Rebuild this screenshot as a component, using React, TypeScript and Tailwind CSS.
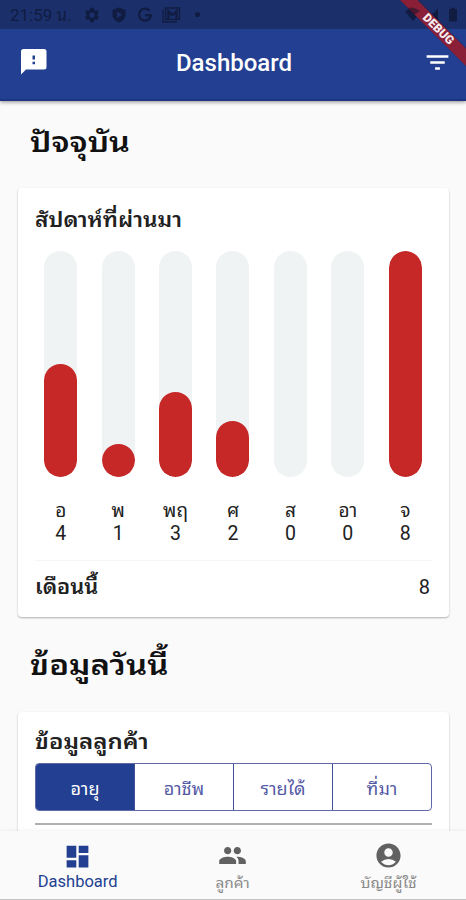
import { useState } from "react";
import { MdAccountCircle, MdDashboard, MdFilterList, MdPeople, MdSettings } from "react-icons/md";

type Day = { label: string; value: number };

const WEEK: Day[] = [
  { label: "อ", value: 4 },
  { label: "พ", value: 1 },
  { label: "พฤ", value: 3 },
  { label: "ศ", value: 2 },
  { label: "ส", value: 0 },
  { label: "อา", value: 0 },
  { label: "จ", value: 8 }
];

const SEGMENTS = ["อายุ", "อาชีพ", "รายได้", "ที่มา"];

const NAV = [
  { label: "Dashboard", icon: MdDashboard },
  { label: "ลูกค้า", icon: MdPeople },
  { label: "บัญชีผู้ใช้", icon: MdAccountCircle }
];

const BAR_HEIGHT = 226;
const BAR_WIDTH = 33;

function StatusBar() {
  return (
    <div className="flex h-[29px] items-center bg-[#1b2f6b] pl-[10px] pr-[9px] text-[#101c42]">
      <span className="w-[62px] whitespace-nowrap pt-0.5 text-[17px] leading-none">21:59 น.</span>
      <MdSettings className="ml-[11px] size-[18px]" />
      <svg className="ml-[10px] size-4" viewBox="0 0 16 16" fill="currentColor">
        <path fillRule="evenodd" d="M8 0.5 14.5 3v4.5c0 4-2.8 6.8-6.5 8-3.700-1.200-6.500-4-6.500-8V3ZM6 4.500v6.500l5-3.250Z" />
      </svg>
      <svg className="ml-[10px] size-4" viewBox="0 0 16 16" fill="none" stroke="currentColor" strokeWidth="2.400">
        <path d="M12.600 3.700A6 6 0 1 0 14 8.300H8.200" />
      </svg>
      <svg className="ml-[9px] h-4 w-[19px]" viewBox="0 0 19 16" fill="none" stroke="currentColor">
        <path d="M1 3v12h14" strokeWidth="1.300" />
        <path d="M3.500 1h14v11.500h-14z" strokeWidth="1.500" />
        <path d="M6.500 12V4.500l4 3.500 4-3.500V12" strokeWidth="2.400" />
      </svg>
      <span className="ml-[14px] size-[5px] rounded-full bg-current" />
      <svg className="ml-auto h-4 w-[52px]" viewBox="0 0 52 16" fill="currentColor">
        <path d="M0 4.500a12 12 0 0 1 16 0L8 14Z" />
        <path d="M33 1.500V14H21Z" />
        <path d="M44 2h2V.8h4V2h2v12.500h-8Z" />
      </svg>
    </div>
  );
}

function DebugBanner() {
  return (
    <svg className="pointer-events-none absolute right-0 top-0 size-[70px]" viewBox="0 0 70 70">
      <path d="M3 0h20l47 47v20Z" fill="#000" opacity="0.12" />
      <path d="M4 0h17.500L70 48.500V66Z" fill="#8a2038" />
      <path d="M12 8q6-2 12 3l-6 4Z" fill="#34142f" opacity="0.75" />
      <text
        x="42.500"
        y="33"
        transform="rotate(45 42.500 29)"
        textAnchor="middle"
        className="fill-[#f7edf0] font-['Roboto',sans-serif] text-[12px] font-black"
      >
        DEBUG
      </text>
    </svg>
  );
}

function FeedbackIcon() {
  return (
    <svg className="-mt-[5px] ml-0.5 size-[26px]" viewBox="0 0 26 26" fill="currentColor">
      <path fillRule="evenodd" d="M2.500 0h20.500a2.500 2.500 0 0 1 2.500 2.500v15.500a2.500 2.500 0 0 1-2.500 2.500H5L0 25.500V2.500A2.500 2.500 0 0 1 2.500 0ZM11.500 6.500v4h2.500v-4ZM11.500 12.800v2.400h2.500v-2.400Z" />
    </svg>
  );
}

function WeekBar({ label, value, max }: Day & { max: number }) {
  const height = value > 0 ? Math.max(BAR_WIDTH, (value / max) * BAR_HEIGHT) : 0;
  return (
    <div className="flex flex-1 flex-col items-center">
      <div className="flex h-[226px] w-[33px] items-end overflow-hidden rounded-full bg-[#f0f3f4]">
        <div className="w-full rounded-full bg-[#c62828]" style={{ height }} />
      </div>
      <span className="mt-[22px] text-[19px] leading-[24px]">{label}</span>
      <span className="text-[19.500px] leading-[21px]">{value}</span>
    </div>
  );
}

export default function App() {
  const [segment, setSegment] = useState(0);
  const [tab, setTab] = useState(0);
  const max = Math.max(...WEEK.map((d) => d.value));

  return (
    <div className="relative flex h-[900px] w-[466px] flex-col overflow-hidden bg-[#fafafa] font-['Roboto','Noto_Sans_Thai_Looped','Noto_Looped_Thai','Loma','Waree','Garuda','Tlwg_Typo','Droid_Sans_Thai','Noto_Serif_Thai','FreeSerif','Noto_Sans',sans-serif] text-[#212121]">
      <header className="relative z-10 shrink-0 bg-[#233f91] text-white shadow-[0_1px_4px_rgba(0,0,0,0.45)]">
        <StatusBar />
        <div className="flex h-[72px] items-center justify-between border-b-2 border-[#1c3585] pl-[19px] pr-[14px]">
          <FeedbackIcon />
          <h1 className="-mt-0.5 mr-0.5 text-[24px] font-medium">Dashboard</h1>
          <MdFilterList className="-mt-[4px] size-[29px]" />
        </div>
      </header>

      <main className="min-h-0 flex-1 overflow-hidden pl-[18px] pr-[17px]">
        <h2 className="ml-3 mt-[22px] h-[65px] origin-left scale-x-[1.16] text-[28px] font-semibold leading-[40px] text-[#111]">ปัจจุบัน</h2>

        <section className="h-[429px] rounded bg-white px-[17px] pt-[17px] shadow-[0_1px_2px_rgba(0,0,0,0.3)]">
          <h3 className="h-[46px] origin-left scale-x-[1.13] text-[20px] font-semibold leading-[30px]">สัปดาห์ที่ผ่านมา</h3>
          <div className="-ml-[3px] -mr-0.5 flex h-[309px]">
            {WEEK.map((day) => (
              <WeekBar key={day.label} {...day} max={max} />
            ))}
          </div>
          <div className="flex items-center justify-between border-t border-[#f5f5f5] pt-[11px]">
            <h3 className="origin-left scale-x-[1.09] text-[20px] font-semibold leading-[30px]">เดือนนี้</h3>
            <span className="pr-0.5 text-[20px] leading-[28px]">8</span>
          </div>
        </section>

        <h2 className="ml-3 mt-[29px] h-[66px] origin-left scale-x-[1.18] text-[28px] font-semibold leading-[40px] text-[#111]">ข้อมูลวันนี้</h2>

        <section className="h-[300px] rounded bg-white px-[17px] pt-[15px] shadow-[0_1px_2px_rgba(0,0,0,0.3)]">
          <h3 className="h-9 origin-left scale-x-[1.2] text-[20px] font-semibold leading-[30px]">ข้อมูลลูกค้า</h3>
          <div className="flex h-12 overflow-hidden rounded border border-[#6068a8]">
            {SEGMENTS.map((name, i) => (
              <button
                key={name}
                type="button"
                onClick={() => setSegment(i)}
                className={`flex-1 border-r border-[#3f5199] pt-0.5 text-[18px] last:border-r-0 ${i === segment ? "bg-[#233f91] text-white" : "text-[#555aa5]"}`}
              >
                {name}
              </button>
            ))}
          </div>
          <div className="mt-3 border-t-2 border-[#b0b0b0]" />
        </section>
      </main>

      <nav className="z-10 flex h-[69px] shrink-0 border-b border-[#c4c4c4] bg-[#fafafa] shadow-[0_-1px_3px_rgba(0,0,0,0.05)]">
        {NAV.map(({ label, icon: Icon }, i) => (
          <button
            key={label}
            type="button"
            onClick={() => setTab(i)}
            className={`flex flex-1 flex-col items-center pt-[10px] ${i === tab ? "text-[#233f91]" : "text-[#616161]"}`}
          >
            <Icon className={i === tab ? "mt-px size-[29px]" : "size-[29px]"} />
            <span
              className={
                i === tab ? "text-[16.500px] leading-[21px]" : "scale-x-110 text-[14px] leading-[26px] text-[#8a8a8a]"
              }
            >
              {label}
            </span>
          </button>
        ))}
      </nav>

      <div className="absolute right-0 top-0 z-20">
        <DebugBanner />
      </div>
    </div>
  );
}
